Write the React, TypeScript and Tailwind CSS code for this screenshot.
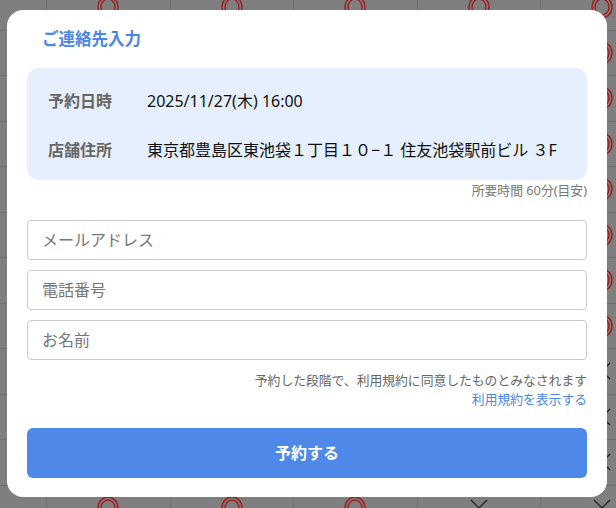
import React from "react";

type Mark = "o" | "x";

function Circle() {
  return (
    <svg width="22" height="24" viewBox="0 0 22 24" fill="none">
      <ellipse cx="11" cy="12" rx="10" ry="11" stroke="#a11c1c" strokeWidth="1.4" />
      <ellipse cx="11" cy="12" rx="7" ry="8" stroke="#a11c1c" strokeWidth="1.4" />
    </svg>
  );
}

function Cross() {
  return (
    <svg width="20" height="20" viewBox="0 0 20 20" fill="none">
      <line x1="2" y1="2" x2="18" y2="18" stroke="#1f1f1f" strokeWidth="1.2" />
      <line x1="18" y1="2" x2="2" y2="18" stroke="#1f1f1f" strokeWidth="1.2" />
    </svg>
  );
}

function Background() {
  const rows = Array.from({ length: 12 }, (_, r) => r);
  const cols = [0, 1, 2, 3, 4];
  const markFor = (r: number, c: number): Mark => {
    if (c === 4) return r <= 7 ? "o" : "x";
    if (c === 3) return r === 11 ? "x" : "o";
    return "o";
  };
  return (
    <div className="-mt-[15px] grid grid-cols-[47px_repeat(5,123.5px)] auto-rows-[45.5px]">
      {rows.map((r) => (
        <React.Fragment key={r}>
          <div className="border-r border-b border-[#6c6c6c]" />
          {cols.map((c) => (
            <div
              key={c}
              className="flex items-center justify-center border-r border-b border-[#6c6c6c]"
            >
              {markFor(r, c) === "o" ? <Circle /> : <Cross />}
            </div>
          ))}
        </React.Fragment>
      ))}
    </div>
  );
}

export default function App() {
  return (
    <div
      className="relative w-[616px] h-[508px] overflow-hidden bg-[#7f7f7f]"
      style={{ fontFamily: '"Noto Sans", "Noto Sans CJK JP", sans-serif' }}
    >
      <Background />
      <div className="absolute left-[7px] top-[10px] w-[600px] h-[487px] bg-white rounded-[16px] px-[20px] pt-[17px] flex flex-col">
        <h2 className="pl-[15px] text-[16.5px] leading-[24px] font-bold text-[#4a86e8]">
          ご連絡先入力
        </h2>
        <div className="mt-[17px] bg-[#e6effd] rounded-[12px] pl-[21px] pt-[21px] pb-[18px] flex flex-col gap-[25px]">
          <div className="flex text-[16px] leading-[24px]">
            <span className="w-[99px] font-bold text-[#666]">予約日時</span>
            <span className="text-[#111]">2025/11/27(木) 16:00</span>
          </div>
          <div className="flex text-[16px] leading-[24px]">
            <span className="w-[99px] font-bold text-[#666]">店舗住所</span>
            <span className="text-[#111]">東京都豊島区東池袋１丁目１０−１ 住友池袋駅前ビル ３F</span>
          </div>
        </div>
        <p className="mt-[1px] text-right text-[12.8px] leading-[18px] text-[#777]">
          所要時間 60分(目安)
        </p>
        <div className="mt-[21px] flex flex-col gap-[10px]">
          {["メールアドレス", "電話番号", "お名前"].map((p) => (
            <input
              key={p}
              placeholder={p}
              className="h-[40px] w-full border border-[#cccccc] rounded-[4px] px-[14px] text-[16px] text-[#222] placeholder:text-[#777] outline-none"
            />
          ))}
        </div>
        <p className="mt-[11px] text-right text-[12.8px] leading-[18px] text-[#666]">
          予約した段階で、利用規約に同意したものとみなされます
        </p>
        <p className="mt-[1px] text-right text-[12.8px] leading-[18px] text-[#4a86e8]">
          利用規約を表示する
        </p>
        <button className="mt-[20px] h-[50px] w-full rounded-[6px] bg-[#4e88e8] text-white text-[16px] font-bold">
          予約する
        </button>
      </div>
    </div>
  );
}
